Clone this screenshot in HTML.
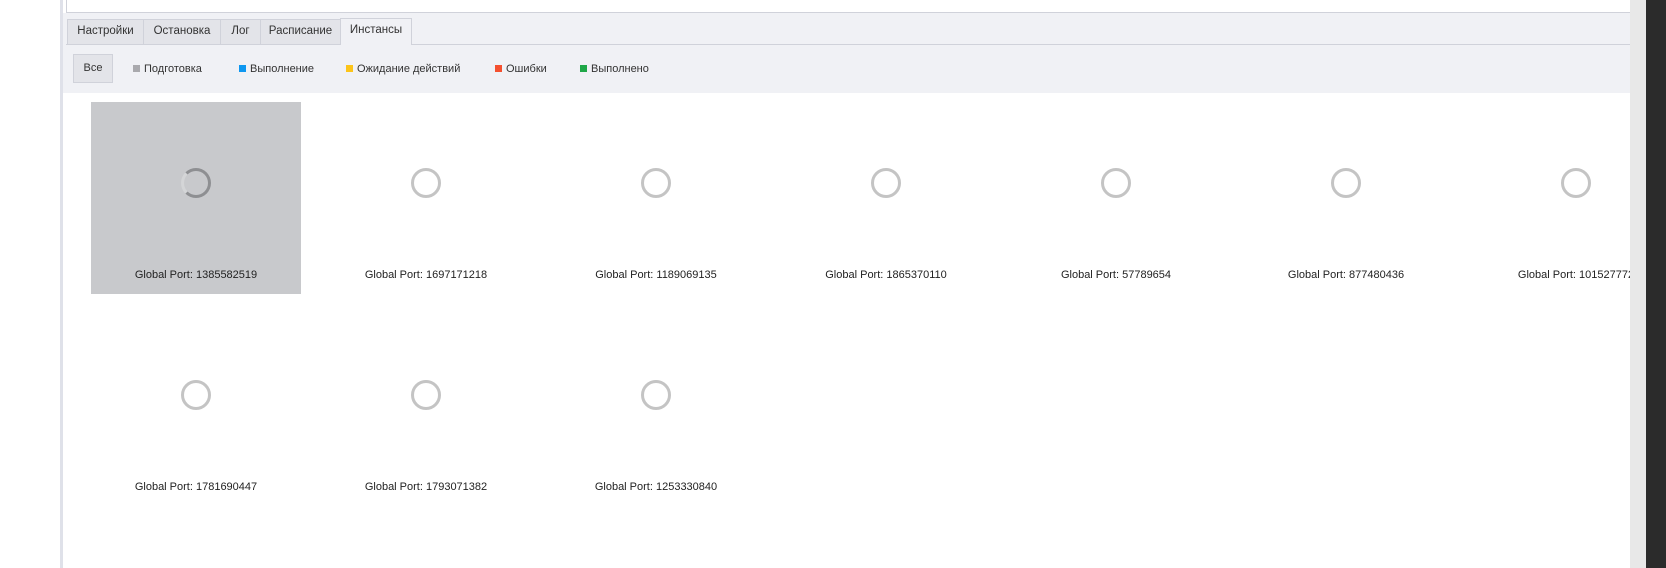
<!DOCTYPE html>
<html><head><meta charset="utf-8"><style>
*{margin:0;padding:0;box-sizing:border-box}
html,body{width:1666px;height:568px;overflow:hidden}
body{background:#fff;position:relative;font-family:"Liberation Sans",sans-serif;color:#222}
.abs{position:absolute}
.tab{position:absolute;top:19px;height:25px;background:#e3e4e9;border:1px solid #d0d2da;border-bottom:none;font-size:11.5px;line-height:23px;text-align:center;color:#333}
.sq{position:absolute;top:65px;width:7px;height:7px}
.lg{position:absolute;top:63px;font-size:11px;color:#333}
.cell{position:absolute;width:210px;height:192px}
.cell .sp{position:absolute;left:90px;top:66px;width:30px;height:30px;border-radius:50%;border:3px solid #c4c4c4}
.cell .lb{position:absolute;left:-20px;width:250px;top:167px;text-align:center;font-size:11px;white-space:nowrap}
</style></head><body>
<div class="abs" style="left:60px;top:0;width:3px;height:568px;background:#dfe1e9"></div>
<div class="abs" style="left:66px;top:0;width:1564px;height:13px;border-left:1px solid #d0d2da;border-bottom:1px solid #d0d2da;background:#fff"></div>
<div class="abs" style="left:63px;top:13px;width:1567px;height:80px;background:#f0f1f5"></div>
<div class="abs" style="left:66px;top:44px;width:1564px;height:1px;background:#d0d2da"></div>
<div class="tab" style="left:67px;width:77px">Настройки</div>
<div class="tab" style="left:143px;width:78px">Остановка</div>
<div class="tab" style="left:220px;width:41px">Лог</div>
<div class="tab" style="left:260px;width:81px">Расписание</div>
<div class="tab" style="left:340px;width:72px;top:18px;height:27px;background:#f0f1f5">Инстансы</div>
<div class="abs" style="left:73px;top:54px;width:40px;height:29px;background:#e3e4e9;border:1px solid #d0d2da;font-size:11px;line-height:27px;text-align:center;color:#333">Все</div>
<div class="sq" style="left:133px;background:#a9a9ad"></div><div class="lg" style="left:144px">Подготовка</div>
<div class="sq" style="left:239px;background:#0e97f0"></div><div class="lg" style="left:250px">Выполнение</div>
<div class="sq" style="left:346px;background:#fcc419"></div><div class="lg" style="left:357px">Ожидание действий</div>
<div class="sq" style="left:495px;background:#f4502f"></div><div class="lg" style="left:506px">Ошибки</div>
<div class="sq" style="left:580px;background:#1fa748"></div><div class="lg" style="left:591px">Выполнено</div>
<div class="abs" style="left:63px;top:93px;width:1567px;height:475px;overflow:hidden;background:#fff">
<div style="position:absolute;left:-63px;top:-93px;width:1700px;height:568px">
<div class="cell" style="left:91px;top:102px;background:#c8c9cc"><div class="sp" style="border-color:#8e8f92;border-left-color:#d4d5d7"></div><div class="lb">Global Port: 1385582519</div></div>
<div class="cell" style="left:321px;top:102px"><div class="sp"></div><div class="lb">Global Port: 1697171218</div></div>
<div class="cell" style="left:551px;top:102px"><div class="sp"></div><div class="lb">Global Port: 1189069135</div></div>
<div class="cell" style="left:781px;top:102px"><div class="sp"></div><div class="lb">Global Port: 1865370110</div></div>
<div class="cell" style="left:1011px;top:102px"><div class="sp"></div><div class="lb">Global Port: 57789654</div></div>
<div class="cell" style="left:1241px;top:102px"><div class="sp"></div><div class="lb">Global Port: 877480436</div></div>
<div class="cell" style="left:1471px;top:102px"><div class="sp"></div><div class="lb">Global Port: 101527772</div></div>
<div class="cell" style="left:91px;top:314px"><div class="sp"></div><div class="lb">Global Port: 1781690447</div></div>
<div class="cell" style="left:321px;top:314px"><div class="sp"></div><div class="lb">Global Port: 1793071382</div></div>
<div class="cell" style="left:551px;top:314px"><div class="sp"></div><div class="lb">Global Port: 1253330840</div></div>
</div></div>
<div class="abs" style="left:1630px;top:0;width:16px;height:568px;background:#e8e8e8"></div>
<div class="abs" style="left:1646px;top:0;width:20px;height:568px;background:#2b2b2b"></div>
</body></html>
